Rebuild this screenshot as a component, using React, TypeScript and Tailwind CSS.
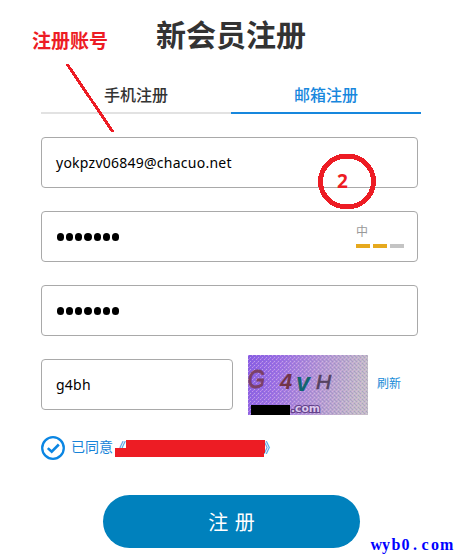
import React from "react";

const field =
  "flex h-[51px] items-center rounded-[4px] border border-[#a9a9a9] bg-white pl-[14px] text-black";

function Dots() {
  return (
    <span className="flex gap-[2px] pl-[1px]" aria-label="password">
      {[0, 1, 2, 3, 4, 5, 6].map((i) => (
        <span key={i} className="h-[8px] w-[7.15px] rounded-full bg-black" />
      ))}
    </span>
  );
}

function Captcha() {
  return (
    <svg className="block h-[60px] w-[120px]" viewBox="0 0 120 60">
      <defs>
        <linearGradient id="bg" x1="0" y1="0" x2="1" y2="0.12">
          <stop offset="0" stopColor="#875ce6" />
          <stop offset="0.28" stopColor="#9c6fe6" />
          <stop offset="0.6" stopColor="#b294d6" />
          <stop offset="0.85" stopColor="#bcaecb" />
          <stop offset="1" stopColor="#c4bec6" />
        </linearGradient>
        <pattern id="dither" width="4" height="4" patternUnits="userSpaceOnUse" shapeRendering="crispEdges">
          <rect x="0" y="0" width="1" height="1" fill="#e5b5ee" opacity="0.6" />
          <rect x="2" y="2" width="1" height="1" fill="#d8cce8" opacity="0.6" />
          <rect x="2" y="0" width="1" height="1" fill="#7772bd" opacity="0.4" />
          <rect x="0" y="2" width="1" height="1" fill="#8a6cc8" opacity="0.4" />
          <rect x="1" y="3" width="1" height="1" fill="#e0a8d8" opacity="0.4" />
          <rect x="3" y="1" width="1" height="1" fill="#8e74bd" opacity="0.3" />
        </pattern>
      </defs>
      <rect width="120" height="60" fill="url(#bg)" />
      <rect width="120" height="60" fill="url(#dither)" />
      <g fontFamily="'Liberation Sans', sans-serif" fontStyle="italic">
        <text x="0" y="33" fontSize="26" fill="#7b4068" stroke="#7b4068" strokeWidth="0.9" textLength="17" lengthAdjust="spacingAndGlyphs">G</text>
        <text x="32" y="34" fontSize="22" fontWeight="700" fill="#723448">4</text>
        <text x="48" y="36" fontSize="25" fontWeight="700" fill="#126570">v</text>
        <text x="68" y="34" fontSize="21" fill="#55425f" stroke="#55425f" strokeWidth="0.6">H</text>
      </g>
      <text x="43" y="57" fontFamily="'DejaVu Sans', sans-serif" fontSize="10" fontWeight="700" fill="#dcc8ee" stroke="#65428b" strokeWidth="2" paintOrder="stroke" textLength="29" lengthAdjust="spacingAndGlyphs">.com</text>
      <rect x="3" y="50" width="39" height="10" fill="#000" />
    </svg>
  );
}

export default function App() {
  return (
    <main className="relative h-[558px] w-[458px] overflow-hidden bg-white pl-[41px] font-['Noto_Sans','Noto_Sans_CJK_SC',sans-serif]">
      <h1 className="flex h-[78px] w-[380px] items-center justify-center pb-[13px] text-[30px] leading-none font-bold text-[#333] font-['Noto_Sans_CJK_SC',sans-serif]">
        新会员注册
      </h1>
      <nav className="flex h-[36px] w-[380px] text-[16px] leading-[33px] font-['Noto_Sans_CJK_SC',sans-serif] font-medium">
        <span className="w-[190px] border-b-2 border-[#e2e2e2] text-center text-[#333]">手机注册</span>
        <span className="w-[190px] border-b-2 border-[#1787dd] text-center text-[#1787dd]">邮箱注册</span>
      </nav>
      <form className="flex w-[377px] flex-col gap-[23px] pt-[23px] text-[14px]">
        <div className={field + " tracking-[0.25px]"}>yokpzv06849@chacuo.net</div>
        <div className={field + " justify-between pr-[13px]"}>
          <Dots />
          <div className="flex flex-col gap-[6px] pb-[1px]">
            <span className="text-[12px] leading-[14px] text-[#999] font-['Noto_Sans_CJK_SC',sans-serif]">中</span>
            <span className="flex gap-[3px]">
              <i className="h-1 w-[14px] bg-[#e6a91e]" />
              <i className="h-1 w-[14px] bg-[#e6a91e]" />
              <i className="h-1 w-[14px] bg-[#c4c4c4]" />
            </span>
          </div>
        </div>
        <div className={field}>
          <Dots />
        </div>
        <div className="flex h-[51px] items-start">
          <div className={field + " w-[192px] tracking-[0.25px]"}>g4bh</div>
          <div className="-mt-1 ml-[15px]">
            <Captcha />
          </div>
          <span className="ml-[9px] pt-[15px] text-[12px] leading-[18px] whitespace-nowrap text-[#168bd8] font-['Noto_Sans_CJK_SC',sans-serif]">
            刷新
          </span>
        </div>
      </form>
      <div className="relative mt-[25px] flex h-[26px] items-center text-[14px] text-[#1683d8] font-['Noto_Sans_CJK_SC',sans-serif]">
        <svg className="h-6 w-6" viewBox="0 0 24 24" fill="none" stroke="#0b86e3">
          <circle cx="12" cy="12" r="10.8" strokeWidth="2.3" />
          <path d="M6.8 12.1l3.9 3.6 7.1-7.2" strokeWidth="2.6" />
        </svg>
        <span className="ml-[6px] pb-1 leading-5">已同意</span>
        <span className="-ml-[1px] pb-1 leading-5">《</span>
        <span className="ml-[137px] pb-1 leading-5">》</span>
        <svg className="absolute top-[5px] left-[74px] h-[17px] w-[150px]" viewBox="0 0 150 17">
          <path d="M11 0H150V13H149V17H0V8H11Z" fill="#ed1c24" />
        </svg>
      </div>
      <button className="mt-[34px] ml-[62px] block h-[53px] w-[257px] rounded-full bg-[#0081bd] text-[20px] leading-[50px] text-white [word-spacing:2px] font-['Noto_Sans_CJK_SC',sans-serif]">
        注 册
      </button>

      <span className="absolute top-[27px] left-[32px] text-[19px] leading-[26px] font-bold text-[#ed1c24] font-['Noto_Sans_CJK_SC',sans-serif]">
        注册账号
      </span>
      <svg className="absolute top-0 left-0 h-[558px] w-[458px]" fill="none" stroke="#ed1c24" shapeRendering="crispEdges">
        <path d="M67 64L113 132" strokeWidth="3" />
        <ellipse cx="347" cy="181.5" rx="26.5" ry="25.5" strokeWidth="5" />
      </svg>
      <span className="absolute top-[169px] left-[337px] text-[19px] leading-[24px] font-bold text-[#ed1c24]">2</span>
      <svg className="absolute top-[530px] left-[340px] h-[28px] w-[118px]" viewBox="340 530 118 28">
        <path d="M342 548.5V547L346 545.5L351 542V549Z" fill="#fff" />
        <text
          x="370.5 382 391.5 401.5 413 421.5 431 440"
          y="550"
          fontFamily="'Liberation Serif', serif"
          fontSize="16"
          fontWeight="700"
          fill="#0000ff"
        >
          wyb0.com
        </text>
      </svg>
    </main>
  );
}
